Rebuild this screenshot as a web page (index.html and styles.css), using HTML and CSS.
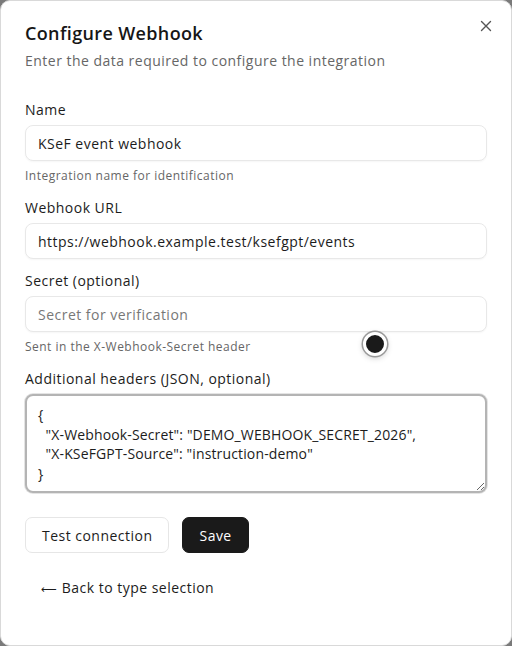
FILE: index.html
```html
<!DOCTYPE html>
<html lang="en">
	<head>
		<meta charset="UTF-8">
		<title>Configure Webhook</title>
		<link rel="stylesheet" href="styles.css">
	</head>
	<body>
		<div class="dialog">
			<button class="close" aria-label="Close">
				<svg width="12" height="12" viewBox="0 0 12 12"><path d="M1.5 1.5 L10.5 10.5 M10.5 1.5 L1.5 10.5" stroke="#555" stroke-width="1.4" stroke-linecap="round"/></svg>
			</button>
			<div class="header">
				<h2 class="title">Configure Webhook</h2>
				<p class="subtitle">Enter the data required to configure the integration</p>
			</div>

			<div class="field">
				<label class="label">Name</label>
				<input class="input" type="text" value="KSeF event webhook">
				<p class="hint">Integration name for identification</p>
			</div>

			<div class="field">
				<label class="label">Webhook URL</label>
				<input class="input" type="text" value="https://webhook.example.test/ksefgpt/events">
			</div>

			<div class="field">
				<label class="label">Secret (optional)</label>
				<input class="input" type="text" placeholder="Secret for verification">
				<p class="hint">Sent in the X-Webhook-Secret header</p>
			</div>

			<div class="field">
				<label class="label">Additional headers (JSON, optional)</label>
				<textarea class="textarea">{
  "X-Webhook-Secret": "DEMO_WEBHOOK_SECRET_2026",
  "X-KSeFGPT-Source": "instruction-demo"
}</textarea>
			</div>

			<div class="actions">
				<button class="btn btn-outline">Test connection</button>
				<button class="btn btn-dark">Save</button>
			</div>

			<button class="back"><span class="arrow">&#10229;</span>Back to type selection</button>

			<!-- cursor indicator -->
			<div class="cursor"></div>
		</div>
	</body>
</html>
```

FILE: styles.css
```css
* {
	margin: 0;
	padding: 0;
	box-sizing: border-box;
}
body {
	background: #7a7a7a;
	font-family: "Open Sans", "Liberation Sans", sans-serif;
	letter-spacing: 0.03em;
	color: #1c1c1c;
}
.dialog {
	position: relative;
	width: 512px;
	height: 646px;
	background: #fff;
	border: 1px solid #d9d9d9;
	border-radius: 10px;
	padding: 20px 24px 24px;
	overflow: hidden;
}
.close {
	position: absolute;
	top: 18px;
	right: 18px;
	width: 14px;
	height: 14px;
	border: 0;
	background: none;
	display: flex;
	align-items: center;
	justify-content: center;
}
.title {
	font-size: 18px;
	line-height: 24px;
	font-weight: 600;
	letter-spacing: 0.02em;
	color: #161616;
}
.subtitle {
	margin-top: 6px;
	font-size: 14px;
	line-height: 20px;
	color: #666;
}
.header {
	margin-bottom: 29px;
}
.field {
	display: flex;
	flex-direction: column;
	margin-bottom: 12px;
}
.label {
	font-size: 14px;
	line-height: 20px;
	font-weight: 500;
	color: #1c1c1c;
	margin-bottom: 5px;
}
.input {
	height: 36px;
	width: 100%;
	border: 1px solid #e8e8e8;
	border-radius: 8px;
	padding: 0 12px;
	font-family: inherit;
	font-size: 14px;
	letter-spacing: inherit;
	color: #1c1c1c;
	background: #fff;
	box-shadow: 0 1px 2px rgba(0,0,0,0.04);
	outline: none;
}
.input::placeholder {
	color: #777;
}
.hint {
	margin-top: 7px;
	font-size: 12px;
	line-height: 16px;
	color: #666;
	margin-bottom: 2px;
}
.textarea {
	display: block;
	height: 99px;
	width: 100%;
	border: 2px solid #b4b4b4;
	border-radius: 8px;
	padding: 9px 11px 8px;
	font-family: inherit;
	font-size: 14px;
	letter-spacing: 0.01em;
	line-height: 19.5px;
	color: #1c1c1c;
	resize: vertical;
	outline: none;
	box-shadow: 0 0 0 1px #e4e4e4;
}
.actions {
	display: flex;
	gap: 13px;
	margin-top: 24px;
}
.btn {
	height: 36px;
	padding: 0 16px;
	border-radius: 7px;
	font-family: inherit;
	font-size: 14px;
	letter-spacing: inherit;
	font-weight: 500;
}
.btn-outline {
	background: #fff;
	border: 1px solid #e6e6e6;
	color: #1c1c1c;
}
.btn-dark {
	background: #1a1a1a;
	border: 1px solid #1a1a1a;
	color: #fff;
}
.back {
	margin-top: 16px;
	height: 36px;
	padding: 0 16px;
	border: 0;
	background: none;
	font-family: inherit;
	font-size: 14px;
	letter-spacing: inherit;
	font-weight: 500;
	color: #1c1c1c;
}
.back .arrow {
	font-family: "DejaVu Sans", sans-serif;
	font-size: 11px;
	letter-spacing: 0;
	margin-right: 5px;
}
.cursor {
	position: absolute;
	left: 362px;
	top: 331px;
	width: 24px;
	height: 24px;
	border-radius: 50%;
	background: #1a1a1a;
	border: 3px solid #fff;
	box-shadow: 0 0 0 1.5px #9a9a9a, 0 2px 6px rgba(0,0,0,0.2);
}
```
